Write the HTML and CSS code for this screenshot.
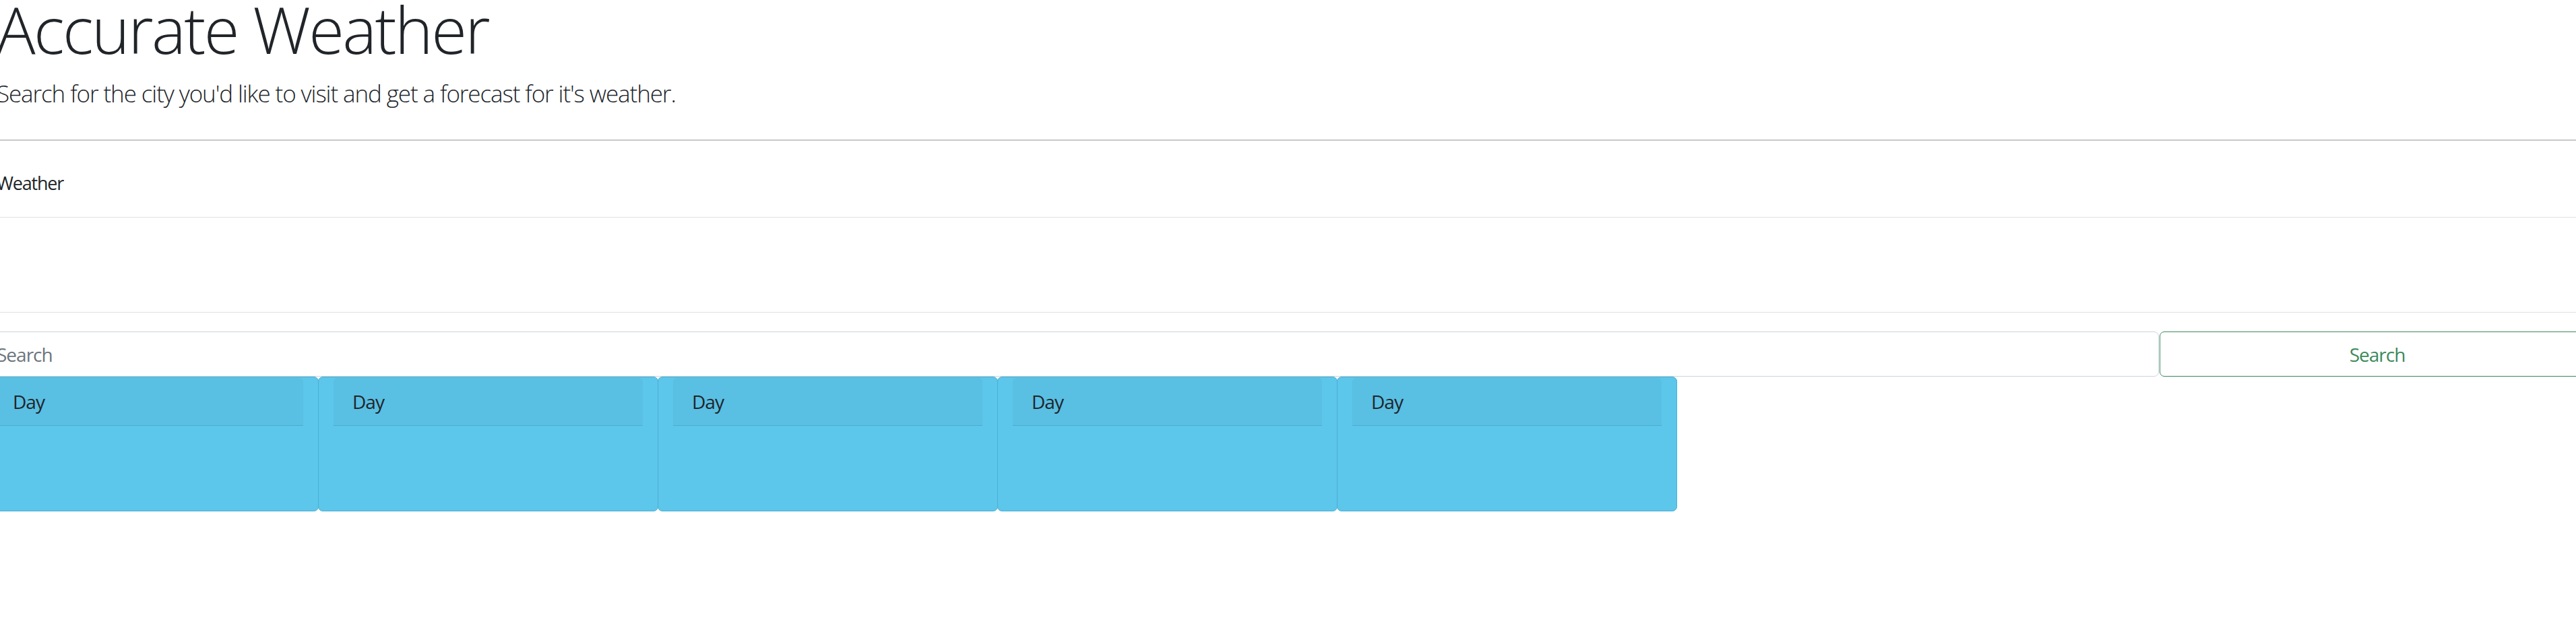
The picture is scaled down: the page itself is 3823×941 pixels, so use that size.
FILE: index.html
```html
<!DOCTYPE html>
<html lang="en">
<head>
<meta charset="utf-8">
<title>Accurate Weather</title>
<link rel="stylesheet" href="styles.css">
</head>
<body>
<div class="page">
  <header class="intro">
    <h1 class="title">Accurate Weather</h1>
    <p class="lead">Search for the city you'd like to visit and get a forecast for it's weather.</p>
  </header>
  <hr class="rule">
  <table class="weather-table">
    <thead>
      <tr><th>Weather</th></tr>
    </thead>
    <tbody>
      <tr><td></td></tr>
    </tbody>
  </table>
  <form class="search-row">
    <input class="search-input" type="text" placeholder="Search">
    <button class="search-btn" type="button">Search</button>
  </form>
  <div class="card-group">
    <div class="card"><div class="card-header">Day</div><div class="card-body"></div></div>
    <div class="card"><div class="card-header">Day</div><div class="card-body"></div></div>
    <div class="card"><div class="card-header">Day</div><div class="card-body"></div></div>
    <div class="card"><div class="card-header">Day</div><div class="card-body"></div></div>
    <div class="card"><div class="card-header">Day</div><div class="card-body"></div></div>
  </div>
</div>
</body>
</html>
```
FILE: styles.css
```css
html, body {
  margin: 0;
  padding: 0;
  background: #ffffff;
  overflow: hidden;
}
body {
  font-family: "Open Sans", "Noto Sans", "Liberation Sans", sans-serif;
  color: #212529;
  font-size: 28px;
}
.page {
  width: 3883px;
  margin-left: -32px;
}
.intro {
  padding-left: 27px;
}
.title {
  margin: 0;
  font-size: 96px;
  font-weight: 300;
  line-height: 86px;
  letter-spacing: -2.6px;
  color: #212529;
}
.lead {
  margin: 27px 0 0;
  font-size: 35px;
  font-weight: 300;
  line-height: 52px;
  letter-spacing: -1.1px;
}
.rule {
  margin: 42px 0 0;
  border: 0;
  border-top: 2px solid #c8c8c8;
  height: 0;
}
.weather-table {
  width: 100%;
  border-collapse: collapse;
}
.weather-table th {
  text-align: left;
  font-weight: 400;
  font-size: 27px;
  line-height: 42px;
  letter-spacing: -1.2px;
  padding: 42px 0 29px 27px;
  border-bottom: 1px solid #dee2e6;
}
.weather-table td {
  height: 140px;
  padding: 0;
  border-bottom: 1px solid #dee2e6;
}
.search-row {
  display: flex;
  gap: 1px;
  margin: 28px 0 0;
}
.search-input {
  width: 3236px;
  height: 67px;
  box-sizing: border-box;
  border: 1px solid #ced4da;
  border-radius: 7px;
  padding: 0 0 0 26px;
  font-family: inherit;
  font-size: 28px;
  line-height: 42px;
  letter-spacing: -1px;
  color: #495057;
  background: #fff;
  outline: none;
}
.search-input::placeholder {
  color: #6c757d;
}
.search-btn {
  width: 646px;
  height: 67px;
  box-sizing: border-box;
  border: 1px solid #3b8a5c;
  border-radius: 7px;
  background: #fff;
  color: #3b8a5c;
  font-family: inherit;
  font-size: 28px;
  line-height: 42px;
  letter-spacing: -1px;
  padding: 0;
}
.card-group {
  display: flex;
}
.card {
  width: 505px;
  height: 200px;
  box-sizing: border-box;
  background: #5cc6eb;
  border: 1px solid #4eaed2;
  border-radius: 7px;
  padding: 1px 22px 0;
}
.card + .card {
  margin-left: -1px;
}
.card-header {
  background: #59bfe3;
  border-bottom: 1px solid #4fabce;
  border-radius: 6px 6px 0 0;
  font-size: 28px;
  line-height: 42px;
  letter-spacing: -1px;
  padding: 14px 28px 14px;
  color: #212529;
}
```
